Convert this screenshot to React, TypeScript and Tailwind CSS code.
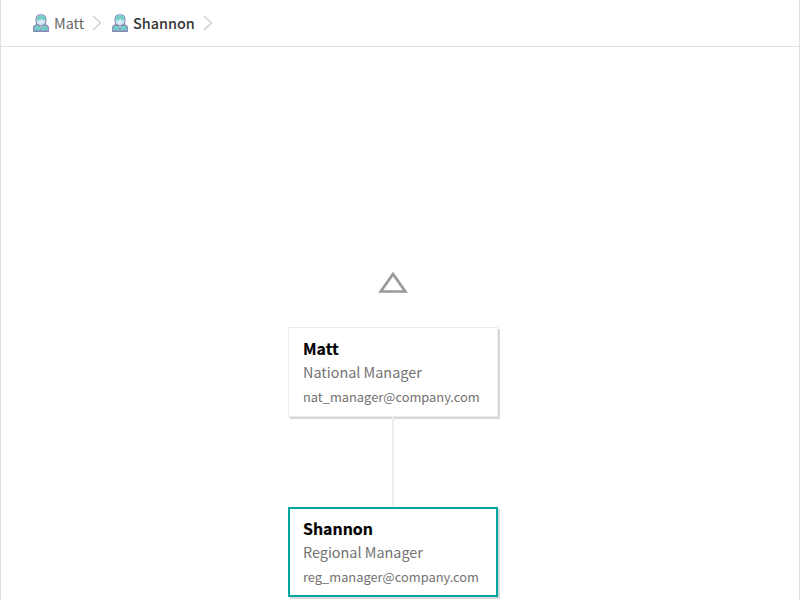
function Person() {
  return (
    <svg className="h-[18px] w-4 shrink-0" viewBox="0 0 16 18" fill="none">
      <path d="M.7 17.300v-3.600c0-1.500 1.200-2.500 3.200-3.100l1.900-.5h4.400l1.900.5c2 .6 3.200 1.600 3.200 3.100v3.600z" fill="#75cfc9" stroke="#8884b5" strokeWidth="1.200" />
      <path d="M4.800 10.500h6.400L8 14.200z" fill="#d5e9f3" stroke="#8884b5" strokeWidth="0.700" />
      <path d="M3 6.200C2.700 2.500 4.500.8 8 .8s5.300 1.700 5 5.400l-.4 3.200c-.9 1.300-2.500 2.300-4.600 2.300s-3.700-1-4.600-2.300z" fill="#d5e9f3" stroke="#8884b5" strokeWidth="1.100" />
      <path d="M3.500 6.600C3.300 2.800 4.900 1.300 8 1.300s4.800 1.600 4.500 5.400C11 6.600 9.300 6 8.400 5 7.100 6.200 5.600 6.700 3.500 6.600z" fill="#75cfc9" />
      <path d="M8 14.200v3.100M3.800 15.200v2.100M12.200 15.200v2.100" stroke="#8884b5" strokeWidth="0.700" />
    </svg>
  );
}

function Chevron() {
  return (
    <svg className="h-4 w-[10px] shrink-0" viewBox="0 0 10 16" fill="none">
      <path d="M1 1l7.500 7L1 15" stroke="#ccc" strokeWidth="1.300" />
    </svg>
  );
}

function Card({ name, role, email, selected = false }: { name: string; role: string; email: string; selected?: boolean }) {
  return (
    <div className={`h-[90px] w-[210px] shrink-0 bg-white shadow-[2px_2px_0_#d8d8d8] ${selected ? "border-2 border-[#00a6a0] pl-[13px] pt-[8px]" : "border border-[#ebebeb] pl-[14px] pt-[9px]"}`}>
      <div className="h-6 whitespace-nowrap text-[15.900px] leading-[23px] font-bold text-black [-webkit-text-stroke:0.2px_black]">{name}</div>
      <div className="h-6 whitespace-nowrap text-[14.4px] leading-[21px] text-[#727272]">{role}</div>
      <div className="h-6 whitespace-nowrap text-[12.850px] leading-[23px] text-[#727272]">{email}</div>
    </div>
  );
}

export default function App() {
  return (
    <div className="flex h-[600px] w-[800px] flex-col overflow-hidden border-x border-[#e0e0e0] bg-white font-['Noto_Sans_CJK_SC',sans-serif]">
      <nav className="flex h-[47px] shrink-0 items-center border-b border-[#e0e0e0] pl-[31.500px] text-[14.4px] leading-6">
        <Person />
        <span className="ml-[5.500px] w-[38px] text-[#666]">Matt</span>
        <Chevron />
        <span className="ml-[9.500px] flex"><Person /></span>
        <span className="ml-[5.500px] w-[70px] font-medium text-[#333]">Shannon</span>
        <Chevron />
      </nav>
      <main className="flex w-[784px] flex-col items-center pt-[225px]">
        <svg className="h-[21px] w-[30px] shrink-0" viewBox="0 0 30 21" fill="none">
          <path d="M2.700 19.500L15 2l12.300 17.500z" stroke="#999" strokeWidth="2.700" />
        </svg>
        <div className="h-[34px] shrink-0" />
        <Card name="Matt" role="National Manager" email="nat_manager@company.com" />
        <div className="h-[90px] w-[2px] shrink-0 bg-[#eee]" />
        <Card name="Shannon" role="Regional Manager" email="reg_manager@company.com" selected />
      </main>
    </div>
  );
}
